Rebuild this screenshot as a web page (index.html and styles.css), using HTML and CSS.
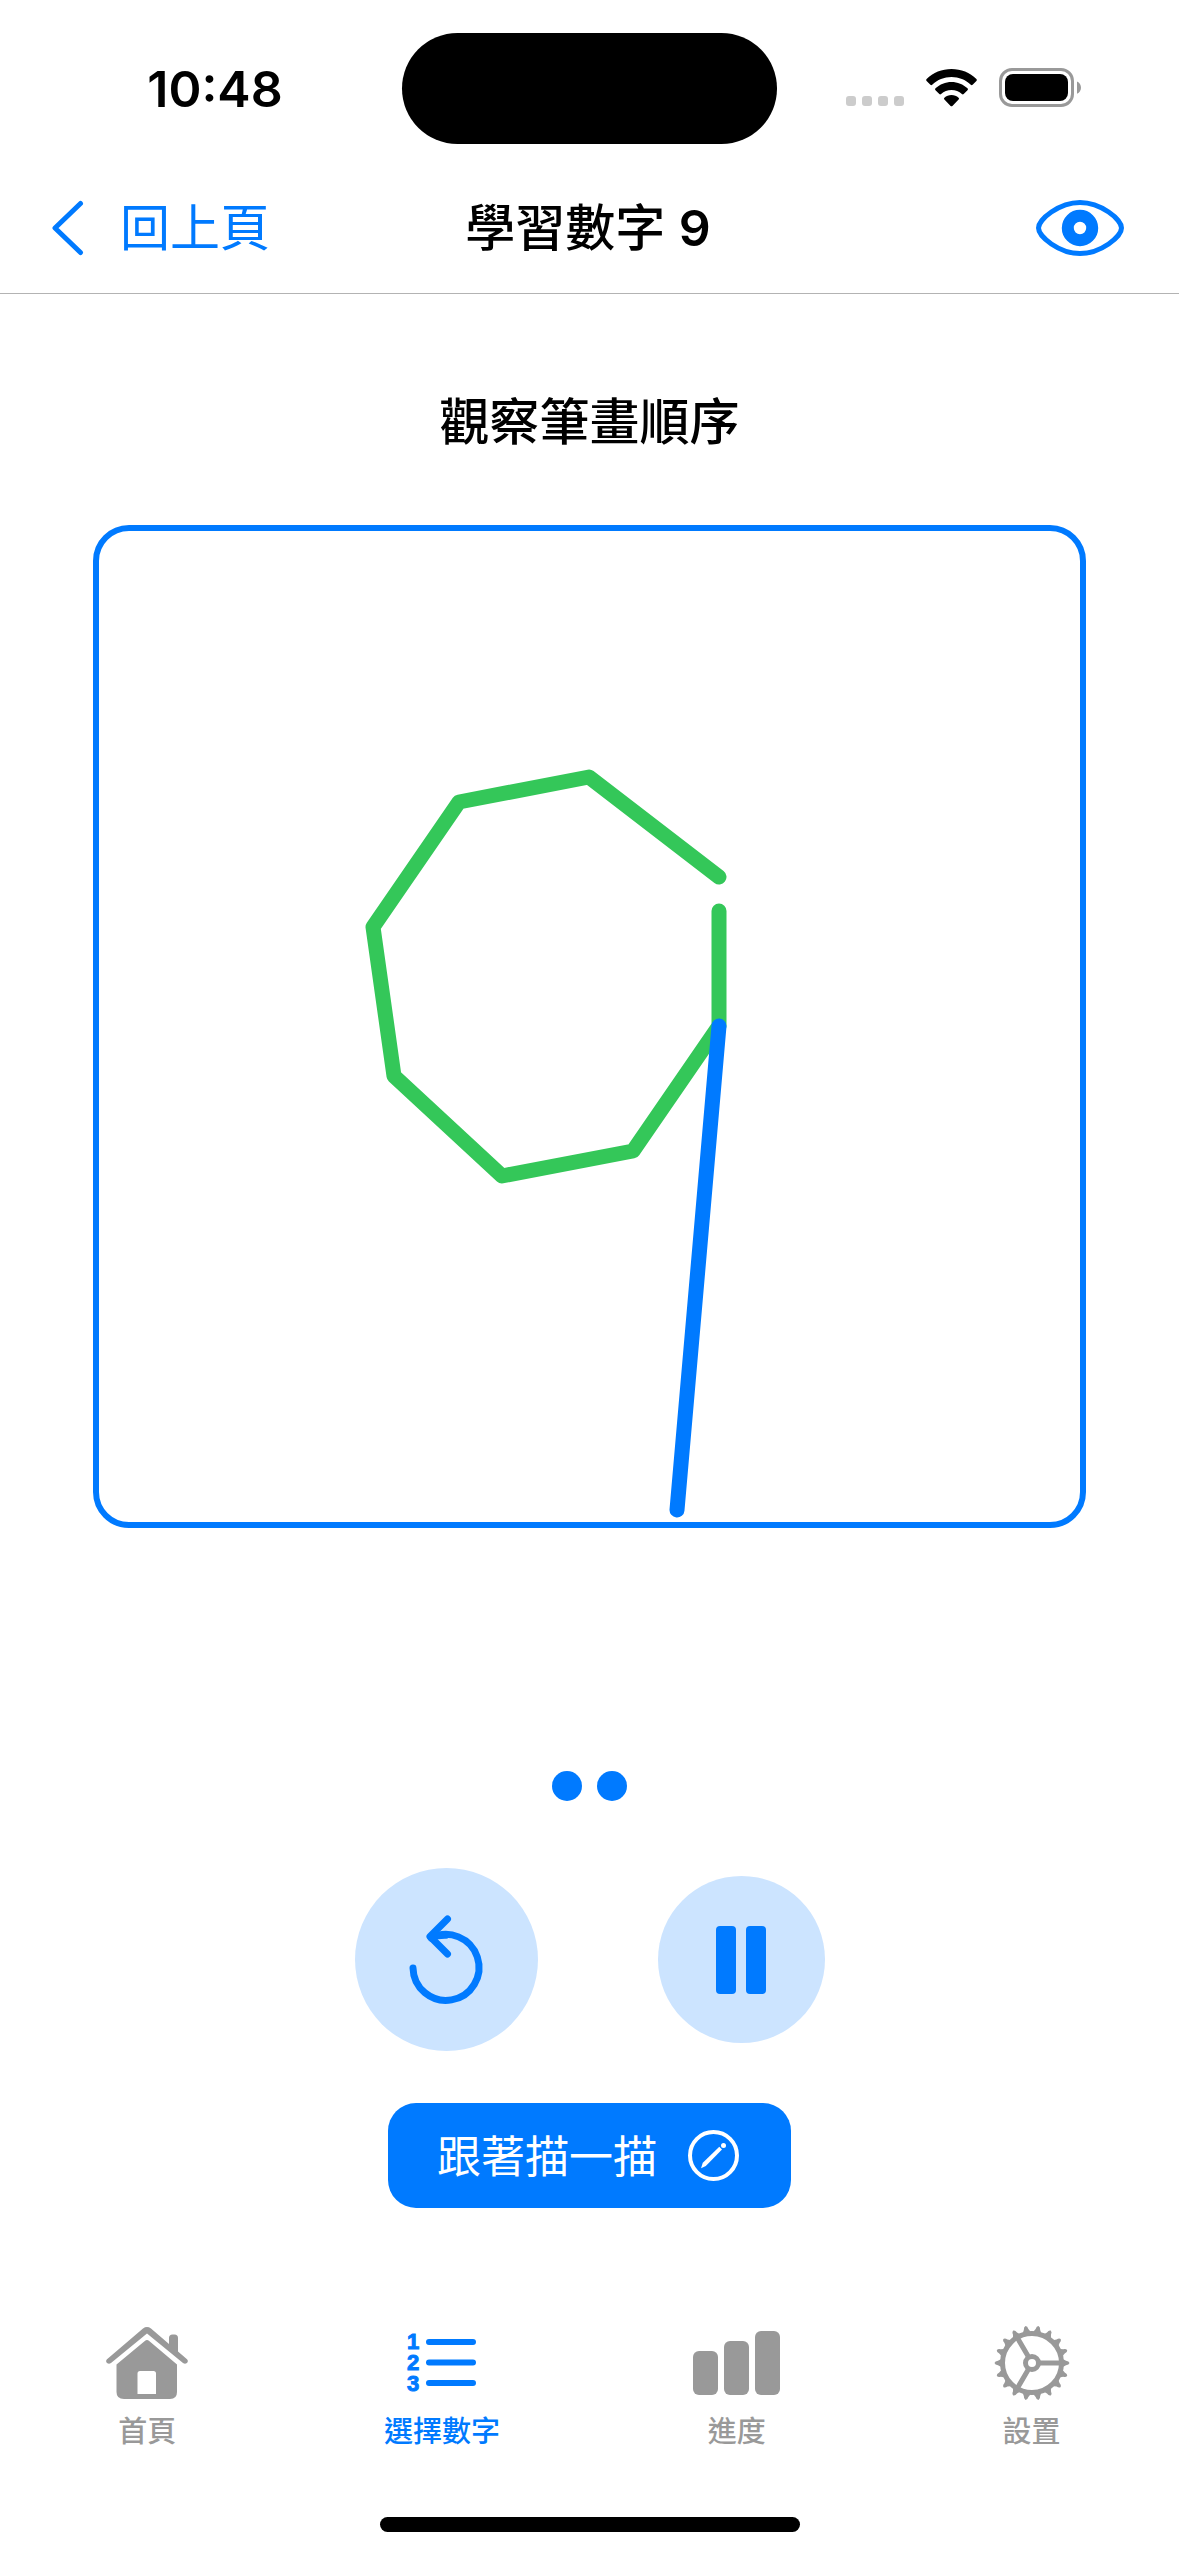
FILE: index.html
```html
<!DOCTYPE html>
<html lang="zh-Hant">
<head>
<meta charset="utf-8">
<meta name="viewport" content="width=device-width, initial-scale=1">
<title>學習數字 9</title>
<link rel="stylesheet" href="styles.css">
</head>
<body>
<div class="status-bar">
  <time class="clock">10:48</time>
  <div class="island"></div>
  <div class="indicators">
    <div class="signal"><i></i><i></i><i></i><i></i></div>
    <svg class="wifi" viewBox="0 0 51 38" width="51" height="38" aria-hidden="true">
      <path d="M25.500 0C35 0 44 3.600 50.400 10a1.300 1.300 0 0 1 0 1.900L46.600 15.700a1.300 1.300 0 0 1-1.800 0C39.700 10.800 32.800 8 25.500 8S11.300 10.800 6.200 15.700a1.300 1.300 0 0 1-1.800 0L.6 11.900a1.300 1.300 0 0 1 0-1.900C7 3.600 16 0 25.500 0Z"/>
      <path d="M25.500 13c6 0 11.700 2.300 16 6.300a1.300 1.300 0 0 1 0 1.900L37.700 25a1.300 1.300 0 0 1-1.800 0c-2.800-2.500-6.500-4-10.400-4s-7.600 1.500-10.400 4a1.300 1.300 0 0 1-1.800 0L9.500 21.200a1.300 1.300 0 0 1 0-1.900C13.800 15.300 19.500 13 25.500 13Z"/>
      <path d="M25.500 26c2.700 0 5.200 1 7.100 2.700a1.300 1.300 0 0 1 0 1.900l-6.200 6.300a1.300 1.300 0 0 1-1.800 0l-6.200-6.300a1.300 1.300 0 0 1 0-1.900C20.300 27 22.800 26 25.500 26Z"/>
    </svg>
    <svg class="battery" viewBox="0 0 82 39" width="82" height="39" aria-hidden="true">
      <rect class="shell" x="1.500" y="1.500" width="72" height="36" rx="11.500"/>
      <rect x="6" y="6" width="63" height="27" rx="8"/>
      <path class="nub" d="M78 13.500c5.300 2.200 5.300 10 0 12.200Z"/>
    </svg>
  </div>
</div>

<header class="nav-bar">
  <a class="back" href="#">
    <svg viewBox="0 0 31 54" width="31" height="54" aria-hidden="true"><path d="M28.500 2.500 3 27l25.500 24.500"/></svg>
    <span>回上頁</span>
  </a>
  <h1 class="title">學習數字 <span class="digit">9</span></h1>
  <button class="preview" type="button" aria-label="預覽">
    <svg viewBox="0 0 88 56" width="88" height="56" aria-hidden="true">
      <path class="lid" d="M44 2.500C65 2.500 85.500 19.500 85.500 28S65 53.500 44 53.500 2.500 36.500 2.500 28 23 2.500 44 2.500Z"/>
      <circle class="iris" cx="44" cy="28" r="12.200"/>
    </svg>
  </button>
</header>

<main class="lesson">
  <h2 class="heading">觀察筆畫順序</h2>
  <svg class="board" viewBox="0 0 981 991" role="img" aria-label="數字 9 的筆畫">
    <path class="stroke done" d="M620 346 490 246 360 271 274 396 295 545 403 645 534 620 620 495V380"/>
    <path class="stroke current" d="M620 495 578 979"/>
  </svg>

  <div class="controls">
    <div class="steps"><i></i><i></i></div>
    <div class="playback">
      <button class="round replay" type="button" aria-label="重播">
        <svg viewBox="0 0 74 90" width="74" height="90" aria-hidden="true">
          <path d="M4 53A33 33 0 1 0 22 23Q28.500 20 37 20.200"/>
          <path d="M38.500 4 21 21.500 38.500 39"/>
        </svg>
      </button>
      <button class="round pause" type="button" aria-label="暫停">
        <svg viewBox="0 0 50 68" width="50" height="68" aria-hidden="true">
          <rect width="20" height="68" rx="4"/><rect x="30" width="20" height="68" rx="4"/>
        </svg>
      </button>
    </div>
    <button class="trace" type="button">
      <span>跟著描一描</span>
      <svg viewBox="0 0 51 51" width="51" height="51" aria-hidden="true">
        <circle cx="25.500" cy="25.500" r="23.500"/>
        <path class="pencil" d="M13 38.200 14.800 32.800 31.300 16.800 34 19.500 17.800 36Z"/>
        <circle class="pencil" cx="35.500" cy="15.500" r="2.500"/>
      </svg>
    </button>
  </div>
</main>

<nav class="tab-bar">
  <a class="tab" href="#">
    <svg viewBox="0 0 82 72" width="82" height="72" aria-hidden="true">
      <path d="M41 13Q42 13 43.500 14.200L71 37.500V65Q71 72 64 72H18Q10.500 72 10.500 65V37.500L38.500 14.200Q40 13 41 13ZM34 44Q31.500 44 31.500 46.500V67H50V46.500Q50 44 47.500 44Z" fill-rule="evenodd"/>
      <path d="M37 1.500Q41-1.300 45 1.500L63 17V11Q63 7.500 66.500 7.500H68.500Q72 7.500 72 11V24.500L81 32.200C83.500 35 80 38 77 36L41 6.500 5 36C2 38-1.500 35 1 32.200Z"/>
    </svg>
    <span>首頁</span>
  </a>
  <a class="tab selected" href="#" aria-current="page">
    <svg viewBox="0 0 72 72" width="72" height="72" aria-hidden="true">
      <g class="numerals"><text x="7" y="22">1</text><text x="7" y="43">2</text><text x="7" y="64">3</text></g>
      <path class="rules" d="M23 15H67M23 35.500H67M23 56H67"/>
    </svg>
    <span>選擇數字</span>
  </a>
  <a class="tab" href="#">
    <svg viewBox="0 0 87 72" width="87" height="72" aria-hidden="true">
      <rect y="24" width="25" height="44" rx="6"/><rect x="31" y="14" width="25" height="54" rx="6"/><rect x="62" y="4" width="25" height="64" rx="6"/>
    </svg>
    <span>進度</span>
  </a>
  <a class="tab" href="#">
    <svg viewBox="-38 -36 76 72" width="76" height="72" aria-hidden="true">
      <defs><path id="tooth" d="M29-5Q32-3.500 34-2.300 37-2 37.500 0 37 2 34 2.300 32 3.500 29 5Z"/></defs>
      <circle class="ring" r="29.500"/>
      <circle class="ring" r="6.500"/>
      <path class="spokes" d="M8 0H29M-4-7-14.500-25M-4 7-14.500 25"/>
      <g>
        <use href="#tooth"/><use href="#tooth" transform="rotate(20)"/><use href="#tooth" transform="rotate(40)"/>
        <use href="#tooth" transform="rotate(60)"/><use href="#tooth" transform="rotate(80)"/><use href="#tooth" transform="rotate(100)"/>
        <use href="#tooth" transform="rotate(120)"/><use href="#tooth" transform="rotate(140)"/><use href="#tooth" transform="rotate(160)"/>
        <use href="#tooth" transform="rotate(180)"/><use href="#tooth" transform="rotate(200)"/><use href="#tooth" transform="rotate(220)"/>
        <use href="#tooth" transform="rotate(240)"/><use href="#tooth" transform="rotate(260)"/><use href="#tooth" transform="rotate(280)"/>
        <use href="#tooth" transform="rotate(300)"/><use href="#tooth" transform="rotate(320)"/><use href="#tooth" transform="rotate(340)"/>
      </g>
    </svg>
    <span>設置</span>
  </a>
</nav>
<div class="home-indicator"></div>
</body>
</html>
```
FILE: styles.css
```css
:root {
  --blue: #007aff;
  --pale-blue: #cce4ff;
  --green: #34c759;
  --gray: #999;
}

* {
  box-sizing: border-box;
}

body {
  display: flex;
  flex-direction: column;
  min-height: 100vh;
  margin: 0;
  background: #fff;
  color: #000;
  font-family: Inter, "Noto Sans CJK TC", sans-serif;
}

svg {
  display: block;
  flex: none;
  overflow: visible;
}

button {
  margin: 0;
  padding: 0;
  border: 0;
  background: none;
  font: inherit;
}

a {
  text-decoration: none;
}

/* Status bar */
.status-bar {
  display: grid;
  grid-template-columns: 1fr auto 1fr;
  align-items: center;
  padding: 33px 0 18px;
}

.clock {
  padding-left: 28px;
  text-align: center;
  font-size: 50px;
  font-weight: 600;
  line-height: 60px;
}

.island {
  width: 375px;
  height: 111px;
  border-radius: 56px;
  background: #000;
}

.indicators {
  display: flex;
  align-items: center;
  justify-content: flex-end;
  gap: 22px;
  padding: 0 98px 2px 0;
}

.signal {
  display: flex;
  align-self: flex-end;
  gap: 6px;
  padding-bottom: 1px;
}

.signal i {
  width: 10px;
  height: 10px;
  border-radius: 3px;
  background: #ccc;
}

.shell {
  fill: none;
  stroke: var(--gray);
  stroke-width: 3;
}

.nub {
  fill: var(--gray);
}

/* Navigation bar */
.nav-bar {
  display: grid;
  grid-template-columns: 1fr auto 1fr;
  align-items: center;
  height: 132px;
  padding: 0 55px 0 52px;
  border-bottom: 1px solid #b3b3b3;
}

.back {
  display: flex;
  align-items: center;
  gap: 37px;
  color: var(--blue);
  font-size: 50px;
  line-height: 60px;
}

.back path {
  fill: none;
  stroke: var(--blue);
  stroke-width: 5;
  stroke-linecap: round;
  stroke-linejoin: round;
}

.title,
.heading {
  margin: 0;
  font-size: 50px;
  font-weight: 500;
  line-height: 60px;
  text-align: center;
}

.digit {
  font-weight: 600;
}

.preview {
  justify-self: end;
}

.lid,
.iris {
  fill: none;
  stroke: var(--blue);
}

.lid {
  stroke-width: 5;
}

.iris {
  stroke-width: 12;
}

/* Lesson */
.lesson {
  display: flex;
  flex: 1;
  flex-direction: column;
  padding: 98px 93px 99px;
}

.board {
  width: 100%;
  margin-top: 73px;
  border: 6px solid var(--blue);
  border-radius: 36px;
}

.stroke {
  fill: none;
  stroke-width: 15;
  stroke-linecap: round;
  stroke-linejoin: round;
}

.done {
  stroke: var(--green);
}

.current {
  stroke: var(--blue);
}

.controls {
  display: flex;
  flex-direction: column;
  align-items: center;
  margin-top: auto;
}

.steps {
  display: flex;
  gap: 15px;
}

.steps i {
  width: 30px;
  height: 30px;
  border-radius: 50%;
  background: var(--blue);
}

.playback {
  display: flex;
  align-items: center;
  gap: 120px;
  margin: 67px 0 52px;
}

.round {
  display: grid;
  place-items: center;
  border-radius: 50%;
  background: var(--pale-blue);
  fill: var(--blue);
}

.replay {
  width: 183px;
  height: 183px;
}

.replay path {
  fill: none;
  stroke: var(--blue);
  stroke-width: 7;
  stroke-linecap: round;
  stroke-linejoin: round;
}

.pause {
  width: 167px;
  height: 167px;
}

.trace {
  display: flex;
  align-items: center;
  gap: 31px;
  height: 105px;
  padding: 0 52px 0 49px;
  border-radius: 28px;
  background: var(--blue);
  color: #fff;
  font-size: 44px;
}

.trace span {
  padding-bottom: 4px;
}

.trace circle {
  fill: none;
  stroke: #fff;
  stroke-width: 4;
}

.trace .pencil {
  fill: #fff;
  stroke: none;
}

/* Tab bar */
.tab-bar {
  display: grid;
  grid-template-columns: repeat(4, 1fr);
  padding-top: 20px;
}

.tab {
  display: flex;
  flex-direction: column;
  align-items: center;
  gap: 15px;
  color: var(--gray);
  fill: currentColor;
  font-size: 29px;
  font-weight: 500;
  line-height: 36px;
}

.selected {
  color: var(--blue);
}

.numerals {
  font-family: "Liberation Sans", sans-serif;
  font-size: 22px;
  font-weight: 700;
  text-anchor: middle;
  stroke: currentColor;
  stroke-width: 1;
}

.rules {
  stroke: currentColor;
  stroke-width: 6;
  stroke-linecap: round;
}

.ring,
.spokes {
  fill: none;
  stroke: currentColor;
  stroke-width: 5;
}

.home-indicator {
  align-self: center;
  width: 420px;
  height: 15px;
  margin: 67px 0 24px;
  border-radius: 8px;
  background: #000;
}
```
